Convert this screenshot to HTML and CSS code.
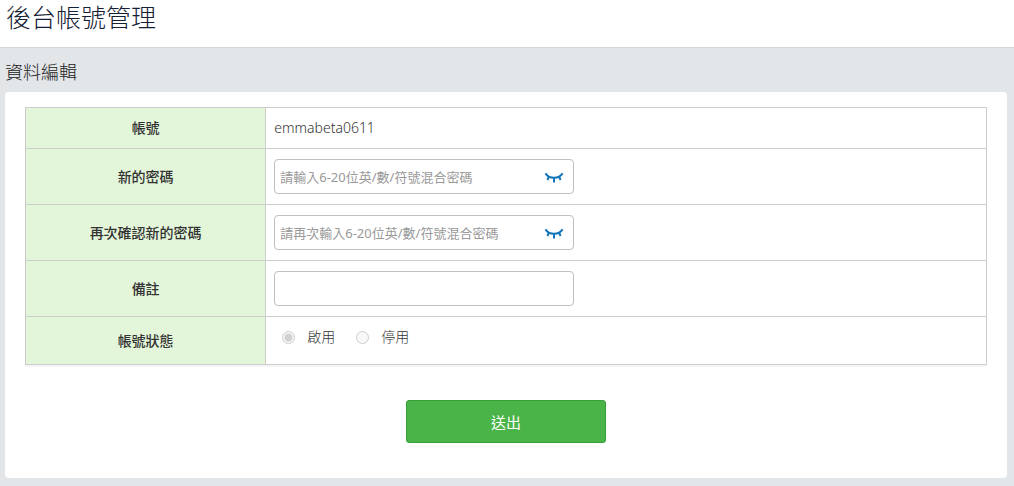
FILE: index.html
```html
<!DOCTYPE html>
<html lang="zh-Hant">
<head>
    <meta charset="UTF-8">
    <meta name="viewport" content="width=device-width, initial-scale=1.0">
    <title>後台帳號管理</title>
    <link rel="stylesheet" href="styles.css">
</head>
<body>
    <header>
        <h1>後台帳號管理</h1>
    </header>

    <main>
        <h2>資料編輯</h2>
        <form class="card" action="#" method="post">
            <table class="edit-table">
                <tr>
                    <th scope="row">帳號</th>
                    <td>emmabeta0611</td>
                </tr>
                <tr>
                    <th scope="row"><label for="password">新的密碼</label></th>
                    <td>
                        <div class="field">
                            <input type="password" id="password" name="password" placeholder="請輸入6-20位英/數/符號混合密碼">
                            <button type="button" class="eye" aria-label="顯示密碼">
                                <svg width="20" height="14" viewBox="0 0 20 14">
                                    <path d="M1.500 3.200C3 6 6 7.800 10 7.800s7-1.800 8.500-4.600M5 6.500L3.400 10M10 7.800V12.500M15 6.500L16.600 10"/>
                                </svg>
                            </button>
                        </div>
                    </td>
                </tr>
                <tr>
                    <th scope="row"><label for="confirm">再次確認新的密碼</label></th>
                    <td>
                        <div class="field">
                            <input type="password" id="confirm" name="confirm" placeholder="請再次輸入6-20位英/數/符號混合密碼">
                            <button type="button" class="eye" aria-label="顯示密碼">
                                <svg width="20" height="14" viewBox="0 0 20 14">
                                    <path d="M1.500 3.200C3 6 6 7.800 10 7.800s7-1.800 8.500-4.600M5 6.500L3.400 10M10 7.800V12.500M15 6.500L16.600 10"/>
                                </svg>
                            </button>
                        </div>
                    </td>
                </tr>
                <tr>
                    <th scope="row"><label for="note">備註</label></th>
                    <td>
                        <div class="field">
                            <input type="text" id="note" name="note">
                        </div>
                    </td>
                </tr>
                <tr>
                    <th scope="row">帳號狀態</th>
                    <td>
                        <div class="status">
                            <label><input type="radio" name="status" value="1" checked disabled>啟用</label>
                            <label><input type="radio" name="status" value="0" disabled>停用</label>
                        </div>
                    </td>
                </tr>
            </table>
            <button type="submit" class="submit">送出</button>
        </form>
    </main>
</body>
</html>
```
FILE: styles.css
```css
* {
    box-sizing: border-box;
}
body {
    margin: 0;
    background-color: #e2e6e9;
    color: #333;
    font-family: "Noto Sans", "Noto Sans CJK TC", sans-serif;
    font-size: 14px;
    font-weight: 300;
    line-height: 20px;
}
header {
    padding: 0 6px 12px;
    background-color: #fff;
    border-bottom: 1px solid #d3d5d7;
}
h1 {
    margin: 0;
    color: #142033;
    font-size: 25px;
    font-weight: 300;
    line-height: 35px;
}
main {
    padding: 12px 7px 8px 5px;
}
h2 {
    margin: 0 0 8px;
    color: #222;
    font-size: 18px;
    font-weight: 300;
    line-height: 24px;
}
.card {
    padding: 15px 20px 35px;
    background-color: #fff;
    border-radius: 4px;
}
.edit-table {
    width: 100%;
    border-collapse: collapse;
    box-shadow: 0 2px 0 #f5f5f5;
}
.edit-table th,
.edit-table td {
    padding: 10px 8px;
    border: 1px solid #ccc;
}
.edit-table th {
    width: 25%;
    background-color: #e3f6d9;
    color: #333;
    font-weight: 500;
    text-align: center;
}
.field {
    position: relative;
    max-width: 300px;
}
.field input {
    display: block;
    width: 100%;
    height: 35px;
    padding: 0 40px 0 5px;
    border: 1px solid #bfbfbf;
    border-radius: 4px;
    background-color: #fff;
    color: #444;
    font-family: inherit;
    font-size: 13px;
}
.field input::placeholder {
    color: #999;
}
/* toggle sits over the right end of the password box */
.eye {
    position: absolute;
    top: 0;
    right: 10px;
    display: flex;
    align-items: center;
    height: 35px;
    padding: 0;
    border: 0;
    background: none;
    cursor: pointer;
}
.eye path {
    fill: none;
    stroke: #1273b8;
    stroke-width: 2;
}
.status {
    display: flex;
    gap: 21px;
    padding: 0 8px 7px;
}
.status label {
    display: flex;
    align-items: center;
    gap: 12px;
}
.status input {
    width: 13px;
    height: 13px;
    margin: 0;
}
.submit {
    display: block;
    width: 200px;
    height: 43px;
    margin: 35px auto 0;
    border: 1px solid #36a03a;
    border-radius: 3px;
    background-color: #4ab448;
    color: #fff;
    font-family: inherit;
    font-size: 15px;
    cursor: pointer;
}
```
